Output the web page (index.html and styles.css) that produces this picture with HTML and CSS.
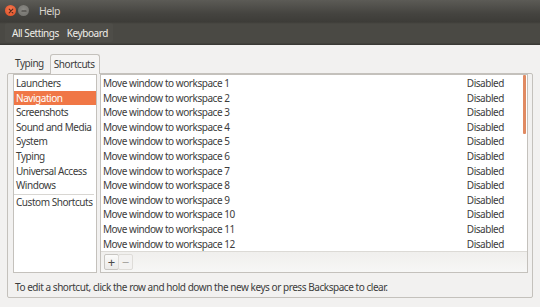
FILE: index.html
```html
<!DOCTYPE html>
<html>
<head>
<meta charset="utf-8">
<link rel="stylesheet" href="styles.css">
</head>
<body>
<div class="window">
  <header class="header">
    <div class="titlebar">
      <div class="wbtns">
        <span class="wbtn close"><svg width="10" height="10" viewBox="0 0 10 10"><path d="M3.2 3.2 L6.8 6.8 M6.8 3.2 L3.2 6.8" stroke="#5a2a1a" stroke-width="1.2" stroke-linecap="round"/></svg></span>
        <span class="wbtn min"><svg width="10" height="10" viewBox="0 0 10 10"><path d="M3 5 H7" stroke="#3c3b37" stroke-width="1.2" stroke-linecap="round"/></svg></span>
      </div>
      <span class="title">Help</span>
    </div>
    <nav class="toolbar">
      <span class="crumbs"><span class="crumb">All Settings</span><span class="crumb">Keyboard</span></span>
    </nav>
  </header>
  <main class="content">
    <div class="tabs">
      <span class="tab">Typing</span>
      <span class="tab active">Shortcuts</span>
    </div>
    <section class="notebook">
      <div class="panes">
        <ul class="categories">
          <li>Launchers</li>
          <li class="selected">Navigation</li>
          <li>Screenshots</li>
          <li>Sound and Media</li>
          <li>System</li>
          <li>Typing</li>
          <li>Universal Access</li>
          <li class="last">Windows</li>
          <li class="custom">Custom Shortcuts</li>
        </ul>
        <div class="shortcuts">
          <div class="scroll">
            <div class="row"><span>Move window to workspace 1</span><span class="acc">Disabled</span></div>
            <div class="row"><span>Move window to workspace 2</span><span class="acc">Disabled</span></div>
            <div class="row"><span>Move window to workspace 3</span><span class="acc">Disabled</span></div>
            <div class="row"><span>Move window to workspace 4</span><span class="acc">Disabled</span></div>
            <div class="row"><span>Move window to workspace 5</span><span class="acc">Disabled</span></div>
            <div class="row"><span>Move window to workspace 6</span><span class="acc">Disabled</span></div>
            <div class="row"><span>Move window to workspace 7</span><span class="acc">Disabled</span></div>
            <div class="row"><span>Move window to workspace 8</span><span class="acc">Disabled</span></div>
            <div class="row"><span>Move window to workspace 9</span><span class="acc">Disabled</span></div>
            <div class="row"><span>Move window to workspace 10</span><span class="acc">Disabled</span></div>
            <div class="row"><span>Move window to workspace 11</span><span class="acc">Disabled</span></div>
            <div class="row"><span>Move window to workspace 12</span><span class="acc">Disabled</span></div>
            <div class="scrollbar"></div>
          </div>
          <div class="listbar">
            <button class="lbtn">+</button><button class="lbtn dim">&minus;</button>
          </div>
        </div>
      </div>
      <p class="hint">To edit a shortcut, click the row and hold down the new keys or press Backspace to clear.</p>
    </section>
  </main>
</div>
</body>
</html>
```
FILE: styles.css
```css
* { box-sizing: border-box; }
html, body { margin: 0; padding: 0; }
body {
  width: 540px;
  height: 307px;
  overflow: hidden;
  background: #f2f1f0;
  font-family: "Noto Sans", "DejaVu Sans", sans-serif;
  font-size: 10px;
  letter-spacing: -0.45px;
  color: #3c3c3c;
}
.window { display: flex; flex-direction: column; height: 307px; }
.header {
  height: 45px;
  background: linear-gradient(#5c5b56 0px, #44433f 14px, #3d3c38 22px, #4a4944 24px, #4a4944 43px, #3a3935 44px);
  color: #dfdbd2;
}
.titlebar { height: 21px; display: flex; align-items: center; padding-left: 5px; }
.wbtns { display: flex; gap: 2px; }
.wbtn {
  width: 11px; height: 11px; border-radius: 50%;
  display: flex; align-items: center; justify-content: center;
}
.wbtn svg { width: 10px; height: 10px; }
.close { background: radial-gradient(circle at 50% 40%, #f57b55, #df4a1e); }
.min { background: radial-gradient(circle at 50% 40%, #8c8b86, #6d6c68); }
.title { margin-left: 10px; font-size: 10.5px; color: #d8d4cc; }
.toolbar { height: 23px; display: flex; align-items: center; padding-left: 5px; color: #f0eee9; font-size: 10px; }
.crumbs {
  display: flex; gap: 8px; height: 19px; align-items: center;
  padding: 0 5px 0 7px;
  border-radius: 2px;
  background: rgba(255,255,255,0.025);
}
.content { flex: 1; padding: 8px 7px 9px 7px; display: flex; flex-direction: column; }
.tabs { display: flex; height: 20px; align-items: flex-end; padding-left: 7px; }
.tab { padding: 0 6px 2px 1px; line-height: 15px; color: #3c3c3c; }
.tab.active {
  background: #f6f5f4;
  border: 1px solid #c4c1bc;
  border-bottom: none;
  border-radius: 3px 3px 0 0;
  height: 20px;
  line-height: 18px;
  margin-bottom: -1px;
  position: relative;
  z-index: 1;
  padding: 0 4px 0 3px;
}
.notebook {
  flex: 1;
  border: 1px solid #c4c1bc;
  border-radius: 2px;
  background: #f2f1f0;
  padding: 0 4px 0 5px;
  display: flex; flex-direction: column;
}
.panes { display: flex; gap: 3px; height: 199px; }
.categories {
  list-style: none; margin: 0; padding: 1px 0 0 0;
  width: 84px;
  background: #fff;
  border: 1px solid #c4c1bc;
}
.categories li { height: 14.6px; line-height: 14.6px; padding-left: 2px; white-space: nowrap; }
.categories li.selected { background: #f07746; color: #fff; }
.categories li.last { border-bottom: 1px solid #d8d6d2; height: 17px; margin-right: 2px; }
.shortcuts {
  flex: 1;
  border: 1px solid #c4c1bc;
  display: flex; flex-direction: column;
  background: #fff;
}
.scroll { position: relative; padding: 1px 0 0 2px; height: 177px; border-bottom: 1px solid #dcdad6; overflow: hidden; }
.row { height: 14.6px; line-height: 14.6px; display: flex; justify-content: space-between; padding-right: 23px; }
.scrollbar {
  position: absolute; right: 1px; top: 0; width: 3px; height: 59px;
  background: #e08a62; border-radius: 1px;
}
.listbar {
  flex: 1;
  background: linear-gradient(#f0efed, #f7f7f6);
  display: flex; align-items: center; padding-left: 3px;
}
.lbtn {
  width: 15px; height: 16px; padding: 0; margin: 0;
  font: inherit; font-size: 13px; line-height: 13px; letter-spacing: 0;
  color: #4a4a4a;
  background: linear-gradient(#fbfbfa, #ebeae8);
  border: 1px solid #c8c6c2;
  border-radius: 2px;
}
.lbtn.dim { color: #a8a6a2; border-color: #dedcd8; background: #f3f2f1; margin-left: -1px; }
.hint { margin: 7px 0 0 2px; line-height: 14px; color: #3c3c3c; white-space: nowrap; }
```
